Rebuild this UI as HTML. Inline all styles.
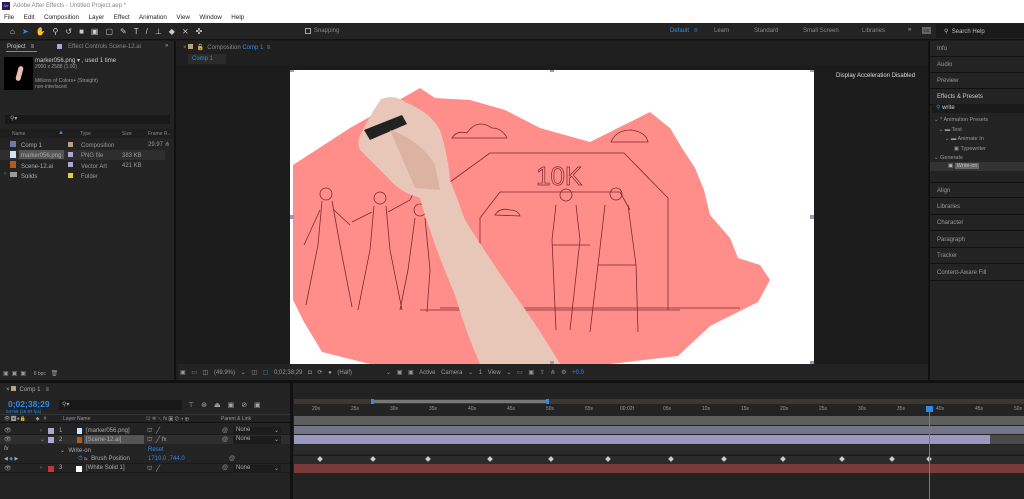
<!DOCTYPE html><html><head><style>
*{margin:0;padding:0;box-sizing:border-box}
body{width:1024px;height:499px;overflow:hidden;background:#1b1b1b;font-family:"Liberation Sans",sans-serif;font-size:6px;color:#a8a8a8;position:relative}
.a{position:absolute;white-space:nowrap}
.bl{color:#2d8ceb}
.rp{position:absolute;left:930px;width:94px;height:16px;border-bottom:1px solid #111;padding:5px 0 0 7px;font-size:6px;color:#999}
.kf{position:absolute;width:4px;height:4px;background:#ccc;transform:rotate(45deg)}
</style></head><body>
<div class="a" style="left:0;top:0;width:1024px;height:23px;background:#fff"></div>
<div class="a" style="left:2px;top:2px;width:8px;height:8px;background:#2b1a5a;color:#b9a6ff;font-size:4px;line-height:8px;text-align:center">Ae</div>
<div class="a" style="left:13px;top:3px;color:#888;font-size:6px">Adobe After Effects - Untitled Project.aep *</div>
<div class="a" style="left:4px;top:14px;color:#222;font-size:6.3px;word-spacing:3px">File&nbsp; Edit&nbsp; Composition&nbsp; Layer&nbsp; Effect&nbsp; Animation&nbsp; View&nbsp; Window&nbsp; Help</div>
<div class="a" style="left:0;top:23px;width:1024px;height:17px;background:#232323;border-bottom:1px solid #111"></div>
<div class="a" style="left:10px;top:27px;color:#ccc;font-size:8px;letter-spacing:7px">⌂<span style="color:#2d8ceb">➤</span>✋⚲↺■▣▢✎T/⊥◆⨯✜</div>
<div class="a" style="left:305px;top:28px;width:6px;height:6px;border:1px solid #aaa"></div>
<div class="a" style="left:314px;top:28px;color:#888">Snapping</div>
<div class="a" style="left:670px;top:28px;color:#2d8ceb">Default&nbsp;&nbsp; ≡</div>
<div class="a" style="left:714px;top:28px;color:#888">Learn</div>
<div class="a" style="left:754px;top:28px;color:#888">Standard</div>
<div class="a" style="left:803px;top:28px;color:#888">Small Screen</div>
<div class="a" style="left:862px;top:28px;color:#888">Libraries</div>
<div class="a" style="left:908px;top:27px;color:#aaa">»</div>
<div class="a" style="left:922px;top:27px;width:9px;height:7px;background:#666;color:#111;font-size:4px;text-align:center;line-height:7px">OS</div>
<div class="a" style="left:936px;top:24px;width:88px;height:14px;background:#1a1a1a"></div>
<div class="a" style="left:944px;top:28px;color:#bbb">⚲&nbsp; Search Help</div>
<div class="a" style="left:0;top:41px;width:174px;height:339px;background:#232323"></div>
<div class="a" style="left:7px;top:44px;color:#ccc">Project&nbsp;&nbsp; ≡</div>
<div class="a" style="left:6px;top:51px;width:31px;height:1px;background:#888"></div>
<div class="a" style="left:57px;top:44px;width:5px;height:5px;background:#aaa6d6"></div>
<div class="a" style="left:68px;top:44px;color:#888">Effect Controls Scene-12.ai</div>
<div class="a" style="left:165px;top:43px;color:#aaa">»</div>
<div class="a" style="left:4px;top:57px;width:29px;height:33px;background:#000"></div>
<div class="a" style="left:17px;top:66px;width:5px;height:15px;background:#e9c0b0;border-radius:3px;transform:rotate(15deg)"></div>
<div class="a" style="left:35px;top:57px;color:#ccc">marker056.png ▾ , used 1 time</div>
<div class="a" style="left:35px;top:64px;color:#999;font-size:5px">2000 x 2588 (1.00)</div>
<div class="a" style="left:35px;top:78px;color:#999;font-size:5px">Millions of Colors+ (Straight)</div>
<div class="a" style="left:35px;top:84px;color:#999;font-size:5px">non-interlaced</div>
<div class="a" style="left:5px;top:115px;width:165px;height:9px;background:#181818;color:#aaa;padding-left:5px;font-size:6px">⚲▾</div>
<div class="a" style="left:0;top:129px;width:174px;height:9px;background:#1e1e1e"></div>
<div class="a" style="left:12px;top:131px;color:#888;font-size:5px">Name</div>
<div class="a" style="left:58px;top:130px;color:#2d8ceb">▲</div>
<div class="a" style="left:80px;top:131px;color:#888;font-size:5px">Type</div>
<div class="a" style="left:122px;top:131px;color:#888;font-size:5px">Size</div>
<div class="a" style="left:148px;top:131px;color:#888;font-size:5px">Frame R..</div>
<div class="a" style="left:0;top:150px;width:165px;height:10px;background:#2e2e2e"></div>
<div class="a" style="left:19px;top:150px;width:45px;height:9px;background:#555"></div>
<div class="a" style="left:10px;top:141px;width:6px;height:6px;background:#6a7aa8"></div>
<div class="a" style="left:10px;top:151px;width:6px;height:7px;background:#cfe4ff"></div>
<div class="a" style="left:10px;top:161px;width:6px;height:7px;background:#b15a1a"></div>
<div class="a" style="left:10px;top:172px;width:7px;height:5px;background:#999"></div>
<div class="a" style="left:4px;top:171px;color:#888">›</div>
<div class="a" style="left:21px;top:141px;color:#aaa;line-height:10.3px">Comp 1<br>marker056.png<br>Scene-12.ai<br>Solids</div>
<div class="a" style="left:68px;top:142px;width:5px;height:5px;background:#b8a27a"></div>
<div class="a" style="left:68px;top:152px;width:5px;height:5px;background:#aaa6d6"></div>
<div class="a" style="left:68px;top:162px;width:5px;height:5px;background:#aaa6d6"></div>
<div class="a" style="left:68px;top:173px;width:5px;height:5px;background:#e0d030"></div>
<div class="a" style="left:81px;top:141px;color:#999;line-height:10.3px">Composition<br>PNG file<br>Vector Art<br>Folder</div>
<div class="a" style="left:122px;top:151px;color:#999;line-height:10.3px">383 KB<br>421 KB</div>
<div class="a" style="left:148px;top:141px;color:#999">29.97 ⋔</div>
<div class="a" style="left:3px;top:370px;color:#999;font-size:6px;letter-spacing:3px">▣▣▣ <span style="font-size:5px;letter-spacing:0">8 bpc</span> 🗑</div>
<div class="a" style="left:174px;top:41px;width:2px;height:339px;background:#111"></div>
<div class="a" style="left:176px;top:41px;width:752px;height:339px;background:#1f1f1f"></div>
<div class="a" style="left:183px;top:44px;color:#888">× <span style="display:inline-block;width:5px;height:5px;background:#b8a27a"></span>&nbsp; 🔓&nbsp; Composition <span class="bl">Comp 1</span>&nbsp; ≡</div>
<div class="a" style="left:188px;top:54px;width:38px;height:10px;background:#2a2a2a;color:#2d8ceb;padding:2px 0 0 4px">Comp 1</div>
<div class="a" style="left:176px;top:65px;width:752px;height:299px;background:#1c1c1c"></div>
<div class="a" style="left:836px;top:73px;color:#ddd;font-size:6px">Display Acceleration Disabled</div>
<svg class="a" style="left:290px;top:70px" width="524" height="294" viewBox="0 0 524 294">
<rect width="524" height="294" fill="#fff"/>
<path d="M3,95 L60,58 L130,18 L145,28 L180,30 L215,40 L250,58 L300,72 L340,52 L360,42 L380,58 L392,78 L405,98 L414,120 L420,145 L440,168 L448,188 L470,195 L480,210 L468,232 L420,256 L388,286 L320,294 L80,294 L32,282 L14,252 L3,230 Z" fill="#ff8e8a"/>
<g fill="none" stroke="#7a2a2a" stroke-width="0.8">
<path d="M160,112 L200,83 L334,83 L378,128 L378,240"/>
<path d="M190,240 L190,148 L210,122 L330,122 L340,140"/>
<path d="M130,240 L390,240"/>
<path d="M150,238 L450,238"/>
<path d="M162,68 q5,-8 15,-5 q10,-15 25,-5 q10,0 15,10 z"/><path d="M321,72 q5,-12 20,-12 q15,2 17,12 z"/><path d="M205,145 q5,-8 15,-5 q8,0 10,6 z"/>
<circle cx="36" cy="124" r="6"/><path d="M32,131 L28,175 L16,235 M42,131 L50,175 L62,237 M30,140 L14,175 M44,140 L60,155"/>
<circle cx="90" cy="128" r="6"/><path d="M84,136 L80,180 L68,240 M96,136 L100,180 L112,240 M82,142 L62,152 M98,142 L120,130 L125,120"/>
<circle cx="130" cy="140" r="6"/><path d="M125,148 L118,200 L110,240 M135,148 L140,200 L137,242"/>
<circle cx="276" cy="125" r="6"/><path d="M266,135 L262,170 L266,260 M286,135 L290,170 L280,260 M262,175 L300,175"/>
<circle cx="326" cy="124" r="6"/><path d="M315,135 L308,195 L300,262 M338,135 L346,195 L348,262 M308,195 L346,195"/>
</g>
<text x="246" y="115" font-family="Liberation Sans" font-size="26" fill="none" stroke="#7a2a2a" stroke-width="0.7">10K</text>
<path d="M91,29 Q105,24 115,32 Q140,42 150,60 Q158,85 160,110 Q168,130 175,150 Q200,190 225,225 Q250,260 270,294 L190,294 Q175,260 165,225 Q150,190 140,160 Q133,140 130,128 Q110,122 100,110 Q85,95 70,80 Q66,70 72,62 Q80,45 91,29Z" fill="#e8c6b8"/>
<path d="M74,60 L112,45 L117,54 L80,70Z" fill="#222"/>
<path d="M100,60 Q130,70 145,95 L150,120 L125,118Z" fill="#dcb2a2"/>
<g fill="#9a98c0"><rect x="0" y="-2" width="4" height="4"/><rect x="260" y="-2" width="4" height="4"/><rect x="520" y="-2" width="4" height="4"/><rect x="0" y="145" width="4" height="4"/><rect x="520" y="145" width="4" height="4"/><rect x="260" y="291" width="4" height="4"/><rect x="520" y="291" width="4" height="4"/></g>
</svg>
<div class="a" style="left:178px;top:364px;width:750px;height:16px;background:#232323"></div>
<div class="a" style="left:180px;top:369px;color:#999;font-size:6px;word-spacing:4px">▣ ▭ ◫ (49.9%) ⌄ ◫ <span class="bl">▢</span> 0;02;38;29 ◘ ⟳ ● (Half) &nbsp;&nbsp;&nbsp;&nbsp;&nbsp;⌄ ▣ ▣ Active Camera ⌄ 1 View ⌄ ▭ ▣ ⇪ ⋔ ⚙ <span class="bl">+0.0</span></div>
<div class="a" style="left:928px;top:41px;width:2px;height:339px;background:#111"></div>
<div class="a" style="left:930px;top:41px;width:94px;height:339px;background:#232323"></div>
<div class="rp" style="top:41px">Info</div>
<div class="rp" style="top:57px">Audio</div>
<div class="rp" style="top:73px">Preview</div>
<div class="rp" style="top:89px;color:#ccc">Effects &amp; Presets</div>
<div class="a" style="left:932px;top:104px;width:92px;height:9px;background:#1a1a1a;color:#ccc;padding-left:4px"><span class="bl">⚲</span> write</div>
<div class="a" style="left:934px;top:116px;color:#999;line-height:9.5px;font-size:5.5px">⌄ * Animation Presets<br>&nbsp;&nbsp;&nbsp;⌄ ▬ Text<br>&nbsp;&nbsp;&nbsp;&nbsp;&nbsp;&nbsp;&nbsp;⌄ ▬ Animate In<br>&nbsp;&nbsp;&nbsp;&nbsp;&nbsp;&nbsp;&nbsp;&nbsp;&nbsp;&nbsp;&nbsp;&nbsp;&nbsp;▣ Typewriter<br>⌄ Generate</div>
<div class="a" style="left:930px;top:162px;width:94px;height:9px;background:#333"></div>
<div class="a" style="left:948px;top:163px;color:#bbb;font-size:5.5px">▣ <span style="background:#666;padding:0 2px">Write-on</span></div>
<div class="rp" style="top:182px;border-top:1px solid #111">Align</div>
<div class="rp" style="top:199px">Libraries</div>
<div class="rp" style="top:215px">Character</div>
<div class="rp" style="top:232px">Paragraph</div>
<div class="rp" style="top:248px">Tracker</div>
<div class="rp" style="top:265px">Content-Aware Fill</div>
<div class="a" style="left:0;top:380px;width:1024px;height:3px;background:#111"></div>
<div class="a" style="left:0;top:383px;width:1024px;height:116px;background:#232323"></div>
<div class="a" style="left:6px;top:386px;color:#aaa">× <span style="display:inline-block;width:5px;height:5px;background:#b8a27a"></span>&nbsp; Comp 1&nbsp;&nbsp; ≡</div>
<div class="a" style="left:8px;top:399px;color:#2d8ceb;font-size:8.5px;font-weight:bold">0;02;38;29</div>
<div class="a" style="left:6px;top:409px;color:#2d8ceb;font-size:4.5px">04765 (29.97 fps)</div>
<div class="a" style="left:59px;top:400px;width:123px;height:10px;background:#181818;color:#aaa;padding:1px 3px">⚲▾</div>
<div class="a" style="left:188px;top:401px;color:#aaa;font-size:7px;letter-spacing:7px">⊤⊛⏏▣⊘▣</div>
<div class="a" style="left:0;top:414px;width:292px;height:9px;border-top:1px solid #333;border-bottom:1px solid #111"></div>
<div class="a" style="left:4px;top:416px;color:#999;font-size:5px">👁◀●🔒&nbsp;&nbsp;&nbsp;&nbsp;&nbsp;&nbsp; ◆&nbsp;&nbsp; #&nbsp;&nbsp;&nbsp;&nbsp;&nbsp;&nbsp;&nbsp;&nbsp;&nbsp;&nbsp;&nbsp; Layer Name</div>
<div class="a" style="left:146px;top:416px;color:#999;font-size:5px">⛫ ✲ ⟍ fx ▣ ⊘ ◑ ⊕</div>
<div class="a" style="left:221px;top:416px;color:#999;font-size:5px">Parent &amp; Link</div>
<div class="a" style="left:0;top:426px;width:292px;height:9px;border-bottom:1px solid #1a1a1a"></div>
<div class="a" style="left:0;top:435px;width:292px;height:9px;background:#2e2e2e"></div>
<div class="a" style="left:84px;top:435px;width:60px;height:9px;background:#555"></div>
<div class="a" style="left:0;top:463px;width:292px;height:10px;border-top:1px solid #1a1a1a;border-bottom:1px solid #1a1a1a"></div>
<div class="a" style="left:4px;top:427px;color:#999;line-height:9.3px">👁<br>👁</div>
<div class="a" style="left:4px;top:465px;color:#999">👁</div>
<div class="a" style="left:48px;top:428px;width:6px;height:6px;background:#aaa6d6"></div>
<div class="a" style="left:48px;top:437px;width:6px;height:6px;background:#aaa6d6"></div>
<div class="a" style="left:48px;top:466px;width:6px;height:6px;background:#c53535"></div>
<div class="a" style="left:40px;top:427px;color:#888;line-height:9.3px">›<br>⌄</div>
<div class="a" style="left:40px;top:465px;color:#888">›</div>
<div class="a" style="left:59px;top:427px;color:#aaa;line-height:9.3px">1<br>2</div>
<div class="a" style="left:59px;top:465px;color:#aaa">3</div>
<div class="a" style="left:77px;top:428px;width:5px;height:6px;background:#cfe4ff"></div>
<div class="a" style="left:77px;top:437px;width:5px;height:6px;background:#b15a1a"></div>
<div class="a" style="left:76px;top:466px;width:6px;height:6px;background:#fff"></div>
<div class="a" style="left:86px;top:427px;color:#aaa;line-height:9.3px">[marker056.png]<br>[Scene-12.ai]</div>
<div class="a" style="left:86px;top:465px;color:#aaa">[White Solid 1]</div>
<div class="a" style="left:147px;top:427px;color:#aaa;line-height:9.3px">⛫&nbsp; ╱<br>⛫&nbsp; ╱ fx</div>
<div class="a" style="left:147px;top:465px;color:#aaa">⛫&nbsp; ╱</div>
<div class="a" style="left:222px;top:427px;color:#999;line-height:9.3px">@<br>@</div>
<div class="a" style="left:222px;top:465px;color:#999">@</div>
<div class="a" style="left:233px;top:427px;width:48px;height:8px;background:#1c1c1c;color:#aaa;padding-left:3px">None <span style="float:right;padding-right:2px">⌄</span></div>
<div class="a" style="left:233px;top:436px;width:48px;height:8px;background:#1c1c1c;color:#aaa;padding-left:3px">None <span style="float:right;padding-right:2px">⌄</span></div>
<div class="a" style="left:233px;top:465px;width:48px;height:8px;background:#1c1c1c;color:#aaa;padding-left:3px">None <span style="float:right;padding-right:2px">⌄</span></div>
<div class="a" style="left:4px;top:446px;color:#aaa;font-style:italic">fx</div>
<div class="a" style="left:60px;top:447px;color:#aaa">⌄&nbsp; Write-on</div>
<div class="a" style="left:148px;top:447px;color:#2d8ceb">Reset</div>
<div class="a" style="left:4px;top:456px;color:#aaa;font-size:5px">◀ <span class="bl">◆</span> ▶</div>
<div class="a" style="left:78px;top:456px;color:#aaa"><span class="bl">⏱</span> ⊾&nbsp; Brush Position</div>
<div class="a" style="left:148px;top:456px;color:#2d8ceb">1710.0 ,744.0</div>
<div class="a" style="left:229px;top:456px;color:#999">@</div>
<div class="a" style="left:290px;top:383px;width:3px;height:116px;background:#111"></div>
<div class="a" style="left:294px;top:399px;width:730px;height:5px;background:#3c3830"></div>
<div class="a" style="left:372px;top:400px;width:176px;height:3px;background:#777"></div>
<div class="a" style="left:371px;top:399px;width:3px;height:5px;background:#2d8ceb"></div>
<div class="a" style="left:546px;top:399px;width:3px;height:5px;background:#2d8ceb"></div>
<div class="a" style="left:294px;top:405px;width:730px;height:10px;color:#999;font-size:5px">
<span class="a" style="left:18px;top:1px">20s</span><span class="a" style="left:57px;top:1px">25s</span><span class="a" style="left:96px;top:1px">30s</span><span class="a" style="left:135px;top:1px">35s</span><span class="a" style="left:174px;top:1px">40s</span><span class="a" style="left:213px;top:1px">45s</span><span class="a" style="left:252px;top:1px">50s</span><span class="a" style="left:291px;top:1px">55s</span><span class="a" style="left:326px;top:1px">00:02f</span><span class="a" style="left:369px;top:1px">05s</span><span class="a" style="left:408px;top:1px">10s</span><span class="a" style="left:447px;top:1px">15s</span><span class="a" style="left:486px;top:1px">20s</span><span class="a" style="left:525px;top:1px">25s</span><span class="a" style="left:564px;top:1px">30s</span><span class="a" style="left:603px;top:1px">35s</span><span class="a" style="left:642px;top:1px">40s</span><span class="a" style="left:681px;top:1px">45s</span><span class="a" style="left:720px;top:1px">50s</span></div>
<div class="a" style="left:294px;top:416px;width:730px;height:9px;background:#5e5e5e"></div>
<div class="a" style="left:294px;top:426px;width:730px;height:8px;background:#75758a"></div>
<div class="a" style="left:294px;top:435px;width:696px;height:9px;background:#9a98c0"></div>
<div class="a" style="left:990px;top:435px;width:34px;height:9px;background:#4a4a4a"></div>
<div class="a" style="left:294px;top:445px;width:730px;height:9px;background:#2b2b2b"></div>
<div class="a" style="left:294px;top:455px;width:730px;height:9px;background:#2b2b2b;border-top:1px solid #1a1a1a"></div>
<div class="a" style="left:294px;top:464px;width:730px;height:9px;background:#7a3a3a"></div>
<div class="kf" style="left:318px;top:457px"></div><div class="kf" style="left:371px;top:457px"></div><div class="kf" style="left:426px;top:457px"></div><div class="kf" style="left:488px;top:457px"></div><div class="kf" style="left:549px;top:457px"></div><div class="kf" style="left:606px;top:457px"></div><div class="kf" style="left:669px;top:457px"></div><div class="kf" style="left:722px;top:457px"></div><div class="kf" style="left:781px;top:457px"></div><div class="kf" style="left:840px;top:457px"></div><div class="kf" style="left:890px;top:457px"></div><div class="kf" style="left:927px;top:457px"></div>
<div class="a" style="left:929px;top:408px;width:1px;height:91px;background:#2d8ceb"></div>
<div class="a" style="left:926px;top:406px;width:7px;height:6px;background:#2d8ceb"></div>
</body></html>
